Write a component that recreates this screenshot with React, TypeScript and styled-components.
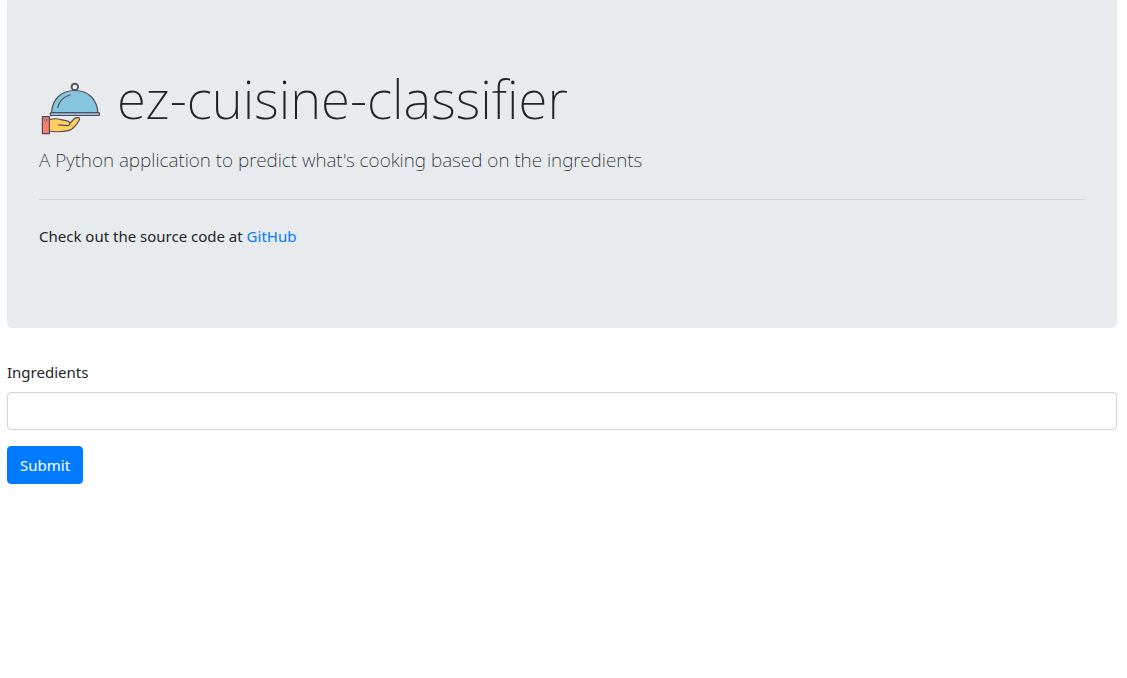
import React from "react";
import styled, { createGlobalStyle } from "styled-components";

const GlobalStyle = createGlobalStyle`
  * { box-sizing: border-box; }
  body {
    margin: 0;
    background: #fefefe;
    color: #212529;
    font-family: "Noto Sans", "Open Sans", sans-serif;
    font-size: 15px;
    line-height: 24px;
  }
`;

const Page = styled.main`
  padding: 0 10px 24px 7px;
`;

const Jumbotron = styled.header`
  padding: 64px 32px;
  margin-bottom: 32px;
  background: #e7ebee;
  border-radius: 2px 2px 5px 5px;
`;

const Title = styled.h1`
  display: flex;
  align-items: flex-start;
  gap: 14px;
  margin: 0 0 5px;
  font-size: 53px;
  font-weight: 200;
  line-height: 70px;
`;

const Logo = styled.svg`
  flex: none;
  width: 64px;
  height: 76px;
`;

const Lead = styled.p`
  margin: 0;
  font-size: 19px;
  font-weight: 200;
  line-height: 30px;
`;

const Divider = styled.hr`
  margin: 24px 0;
  border: 0;
  border-top: 1px solid #d0d4d9;
`;

const Text = styled.p`
  margin: 0 0 16px;
`;

const Link = styled.a`
  color: #007bff;
  text-decoration: none;
  &:hover { text-decoration: underline; }
`;

const Field = styled.div`
  margin-bottom: 16px;
`;

const Label = styled.label`
  display: block;
  margin-bottom: 8px;
`;

const Input = styled.input`
  display: block;
  width: 100%;
  height: 38px;
  padding: 6px 12px;
  border: 1px solid #ced4da;
  border-radius: 4px;
  background: #fefefe;
  color: #495057;
  font: inherit;
`;

const Button = styled.button`
  height: 38px;
  padding: 6px 12px;
  border: 1px solid #007bff;
  border-radius: 4px;
  background: #007bff;
  color: #fff;
  font: inherit;
  cursor: pointer;
`;

const ClocheLogo = () => (
  <Logo viewBox="0 -12.5 64 76" aria-hidden="true" fill="none" stroke="#5d4658" strokeWidth="1.2" strokeLinecap="round" strokeLinejoin="round">
    <circle cx="35.8" cy="10.4" r="3.2" stroke="#50556b" strokeWidth="2" />
    <circle cx="35.8" cy="10.4" r="2" fill="#f3f5f8" stroke="none" />
    <path d="M12.6 36.2C13 22.5 22.5 14 35.8 14S58 22.5 58.9 36.2Z" fill="#84c6de" />
    <rect x="11.4" y="36.2" width="49" height="2.8" rx="0.6" fill="#84c6de" />
    <path d="M18.7 31.2C20.2 24.5 24.5 20.3 31 18.5" />
    <path d="M10 43.2C14.5 42 18.5 41.8 22 43.2L28 44.3C30 44.7 31 46 30.6 47.2L35 42.5C36.5 40.8 39.6 40.7 40.6 41.7C40.9 43.7 38.7 46.5 36.2 49.4C33.8 52.3 31.8 53.8 29 54.2C21 56.2 16 55.2 10 54.5Z" fill="#fdd05f" />
    <path d="M19.5 48.3L28.5 49.2C30 49.2 30.7 48.3 30.6 47.2" />
    <rect x="3.4" y="40.2" width="7" height="17" fill="#fb7d6d" />
    <circle cx="6.6" cy="43.4" r="1.3" fill="#f3e2e3" strokeWidth="0.8" />
  </Logo>
);

export default function App() {
  return (
    <>
      <GlobalStyle />
      <Page>
        <Jumbotron>
          <Title>
            <ClocheLogo />
            ez-cuisine-classifier
          </Title>
          <Lead>A Python application to predict what's cooking based on the ingredients</Lead>
          <Divider />
          <Text>
            Check out the source code at <Link href="https://github.com">GitHub</Link>
          </Text>
        </Jumbotron>
        <form onSubmit={(event) => event.preventDefault()}>
          <Field>
            <Label htmlFor="ingredients">Ingredients</Label>
            <Input id="ingredients" name="ingredients" type="text" />
          </Field>
          <Button type="submit">Submit</Button>
        </form>
      </Page>
    </>
  );
}
